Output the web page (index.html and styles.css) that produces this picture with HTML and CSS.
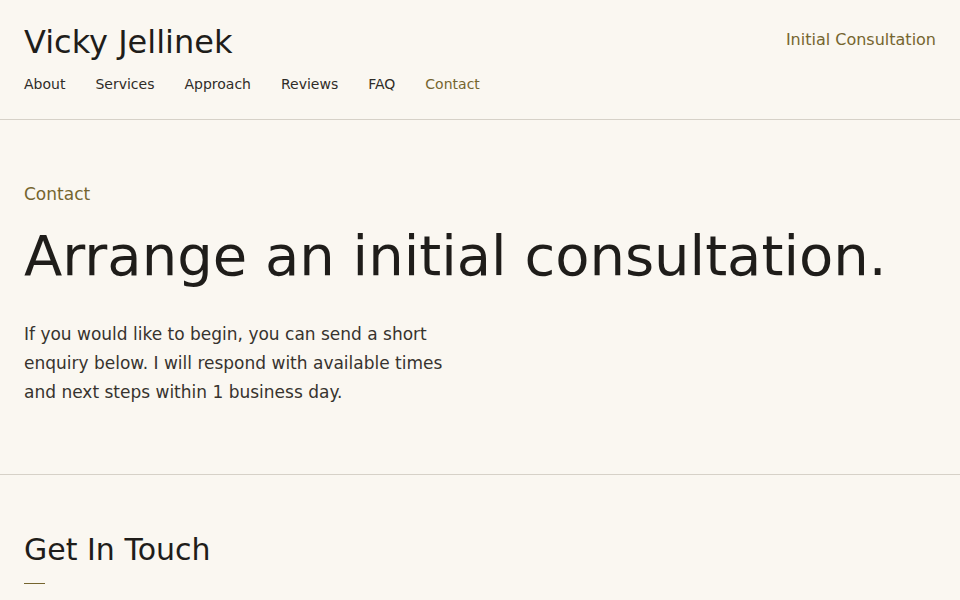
FILE: index.html
```html
<!DOCTYPE html>
<html lang="en">
<head>
    <meta charset="UTF-8">
    <title>Vicky Jellinek - Contact</title>
    <link rel="stylesheet" href="styles.css">
</head>
<body>
    <header class="site-header">
        <div class="brand-block">
            <div class="brand">Vicky Jellinek</div>
            <nav class="main-nav">
                <a href="#about">About</a>
                <a href="#services">Services</a>
                <a href="#approach">Approach</a>
                <a href="#reviews">Reviews</a>
                <a href="#faq">FAQ</a>
                <a href="#contact" class="active">Contact</a>
            </nav>
        </div>
        <a href="#enquiry" class="header-cta">Initial Consultation</a>
    </header>

    <section class="intro" id="contact">
        <div class="eyebrow">Contact</div>
        <h1>Arrange an initial consultation.</h1>
        <p class="lead">If you would like to begin, you can send a short enquiry below. I will respond with available times and next steps within 1 business day.</p>
    </section>

    <section class="touch" id="enquiry">
        <h2>Get In Touch</h2>
        <div class="accent-rule"></div>
    </section>
</body>
</html>
```

FILE: styles.css
```css
body {
    background: #faf7f1;
    color: #1f1d1a;
    font-family: "DejaVu Sans", sans-serif;
    margin: 0;
}

a {
    text-decoration: none;
    color: inherit;
}

.site-header {
    display: flex;
    justify-content: space-between;
    align-items: flex-start;
    padding: 23px 24px 24px;
    border-bottom: 1px solid #d6d1c8;
}

.brand {
    font-size: 32px;
    line-height: 1.2;
    color: #1f1d1a;
    margin-bottom: 13px;
}

.main-nav {
    display: flex;
    gap: 30px;
    font-size: 14px;
    line-height: 1.5;
}

.main-nav a {
    color: #2f2c28;
}

.main-nav a.active {
    color: #75652f;
}

.header-cta {
    font-size: 16px;
    line-height: 1.5;
    margin-top: 5px;
    color: #75652f;
}

.intro {
    padding: 62px 24px 67px;
    border-bottom: 1px solid #d6d1c8;
}

.eyebrow {
    font-size: 17px;
    line-height: 1.5;
    color: #75652f;
    margin-bottom: 17px;
}

h1 {
    font-size: 56px;
    font-weight: normal;
    line-height: 1.1;
    margin: 0 0 34px;
    color: #1f1d1a;
}

.lead {
    font-size: 17px;
    line-height: 1.7;
    max-width: 440px;
    margin: 0;
    color: #37332e;
}

.touch {
    padding: 57px 24px 40px;
}

h2 {
    font-size: 30px;
    font-weight: normal;
    line-height: 1.2;
    margin: 0 0 15px;
    color: #1f1d1a;
}

.accent-rule {
    width: 21px;
    height: 1px;
    background: #75652f;
}
```
